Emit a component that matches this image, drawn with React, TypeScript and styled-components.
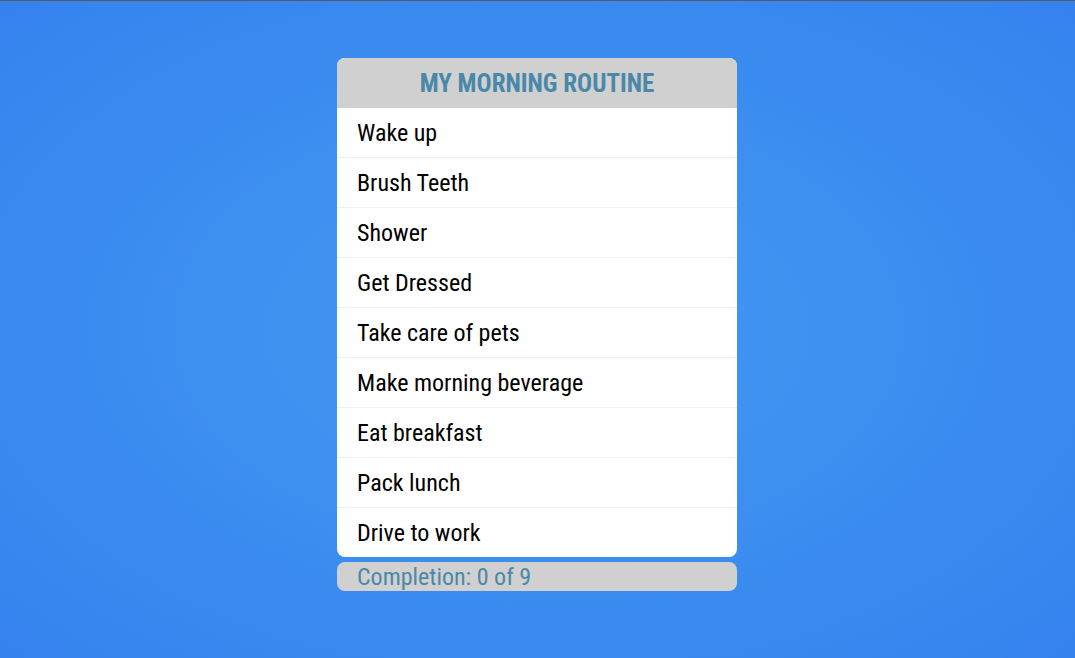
import React from 'react'
import styled, { createGlobalStyle } from 'styled-components'

const GlobalStyle = createGlobalStyle`
  html, body {
    margin: 0;
    height: 100%;
  }
  body {
    font-family: "Roboto Condensed", Roboto, "Liberation Sans", sans-serif;
    font-stretch: condensed;
    border-top: 1px solid #555a63;
    box-sizing: border-box;
    background: radial-gradient(ellipse at center, #4499f1 0%, #3d8ff0 45%, #3582ee 100%);
    overflow: hidden;
  }
  #root {
    height: 100%;
  }
`

const Page = styled.div`
  display: flex;
  justify-content: center;
  padding-top: 57px;
  padding-right: 1px;
`

const Column = styled.div`
  width: 400px;
  display: flex;
  flex-direction: column;
  gap: 5px;
`

const Card = styled.div`
  background: #fff;
  border-radius: 8px;
  overflow: hidden;
`

const Header = styled.h1`
  margin: 0;
  height: 50px;
  background: #d0d0d0;
  color: #4a88a9;
  font-size: 25px;
  font-weight: 700;
  text-align: center;
  line-height: 52px;
`

const List = styled.ul`
  list-style: none;
  margin: 0;
  padding: 0;
`

const Item = styled.li`
  height: 50px;
  padding: 0 20px;
  display: flex;
  align-items: center;
  font-size: 24px;
  color: #000;
  border-bottom: 1px solid #efefef;
  box-sizing: border-box;

  &:last-child {
    border-bottom: none;
    height: 49px;
  }
`

const Footer = styled.div`
  height: 29px;
  background: #d0d0d0;
  border-radius: 8px;
  padding: 0 20px;
  display: flex;
  align-items: center;
  color: #4a88a9;
  font-size: 24px;
`

const tasks = [
  'Wake up',
  'Brush Teeth',
  'Shower',
  'Get Dressed',
  'Take care of pets',
  'Make morning beverage',
  'Eat breakfast',
  'Pack lunch',
  'Drive to work',
]

export default function App() {
  const done = 0
  return (
    <>
      <GlobalStyle />
      <Page>
        <Column>
          <Card>
            <Header>MY MORNING ROUTINE</Header>
            <List>
              {tasks.map(t => (
                <Item key={t}>{t}</Item>
              ))}
            </List>
          </Card>
          <Footer>
            Completion: {done} of {tasks.length}
          </Footer>
        </Column>
      </Page>
    </>
  )
}
